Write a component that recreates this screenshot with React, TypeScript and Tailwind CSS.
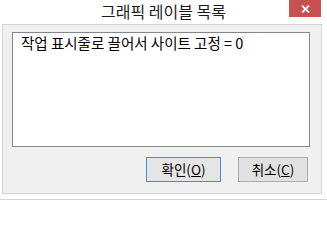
export default function App() {
  return (
    <div className="relative h-[200px] w-[327px] overflow-hidden bg-white font-['Noto_Sans_CJK_KR','Noto_Sans',sans-serif] text-black">
      {/* title bar */}
      <div className="relative flex h-[24px] items-center justify-center">
        <span className="mt-[-2px] text-[16px] leading-none text-[#1a1a1a]">그래픽 레이블 목록</span>
        <button className="absolute right-[6px] top-0 flex h-[17px] w-[32px] items-center justify-center bg-[#c75050]">
          <svg width="9" height="8" viewBox="0 0 9 8">
            <path d="M1 0.5 L8 7.5 M8 0.5 L1 7.5" stroke="#fff" strokeWidth="1.8" />
          </svg>
        </button>
      </div>

      {/* client area */}
      <div className="ml-[2px] h-[170px] w-[320px] border border-[#d4d4d4] bg-[#f0f0f0]">
        <div className="ml-[9px] mt-[7px] h-[115px] w-[298px] border border-[#828790] bg-white">
          <div className="pl-[8px] pt-[1px] text-[14.5px] leading-[17px]">작업 표시줄로 끌어서 사이트 고정 = 0</div>
        </div>

        <div className="mt-[10px] flex justify-end gap-[17px] pr-[13px]">
          <button className="flex h-[25px] w-[75px] items-center justify-center border border-[#3c8fd8] bg-[#e5e5e5] text-[13.5px] leading-none">
            확인(<span className="underline">O</span>)
          </button>
          <button className="flex h-[25px] w-[70px] items-center justify-center border border-[#acacac] bg-[#e1e1e1] text-[13.5px] leading-none">
            취소(<span className="underline">C</span>)
          </button>
        </div>
      </div>

      <div className="mt-[5px] h-px w-full bg-[#d4d4d4]" />
    </div>
  );
}
